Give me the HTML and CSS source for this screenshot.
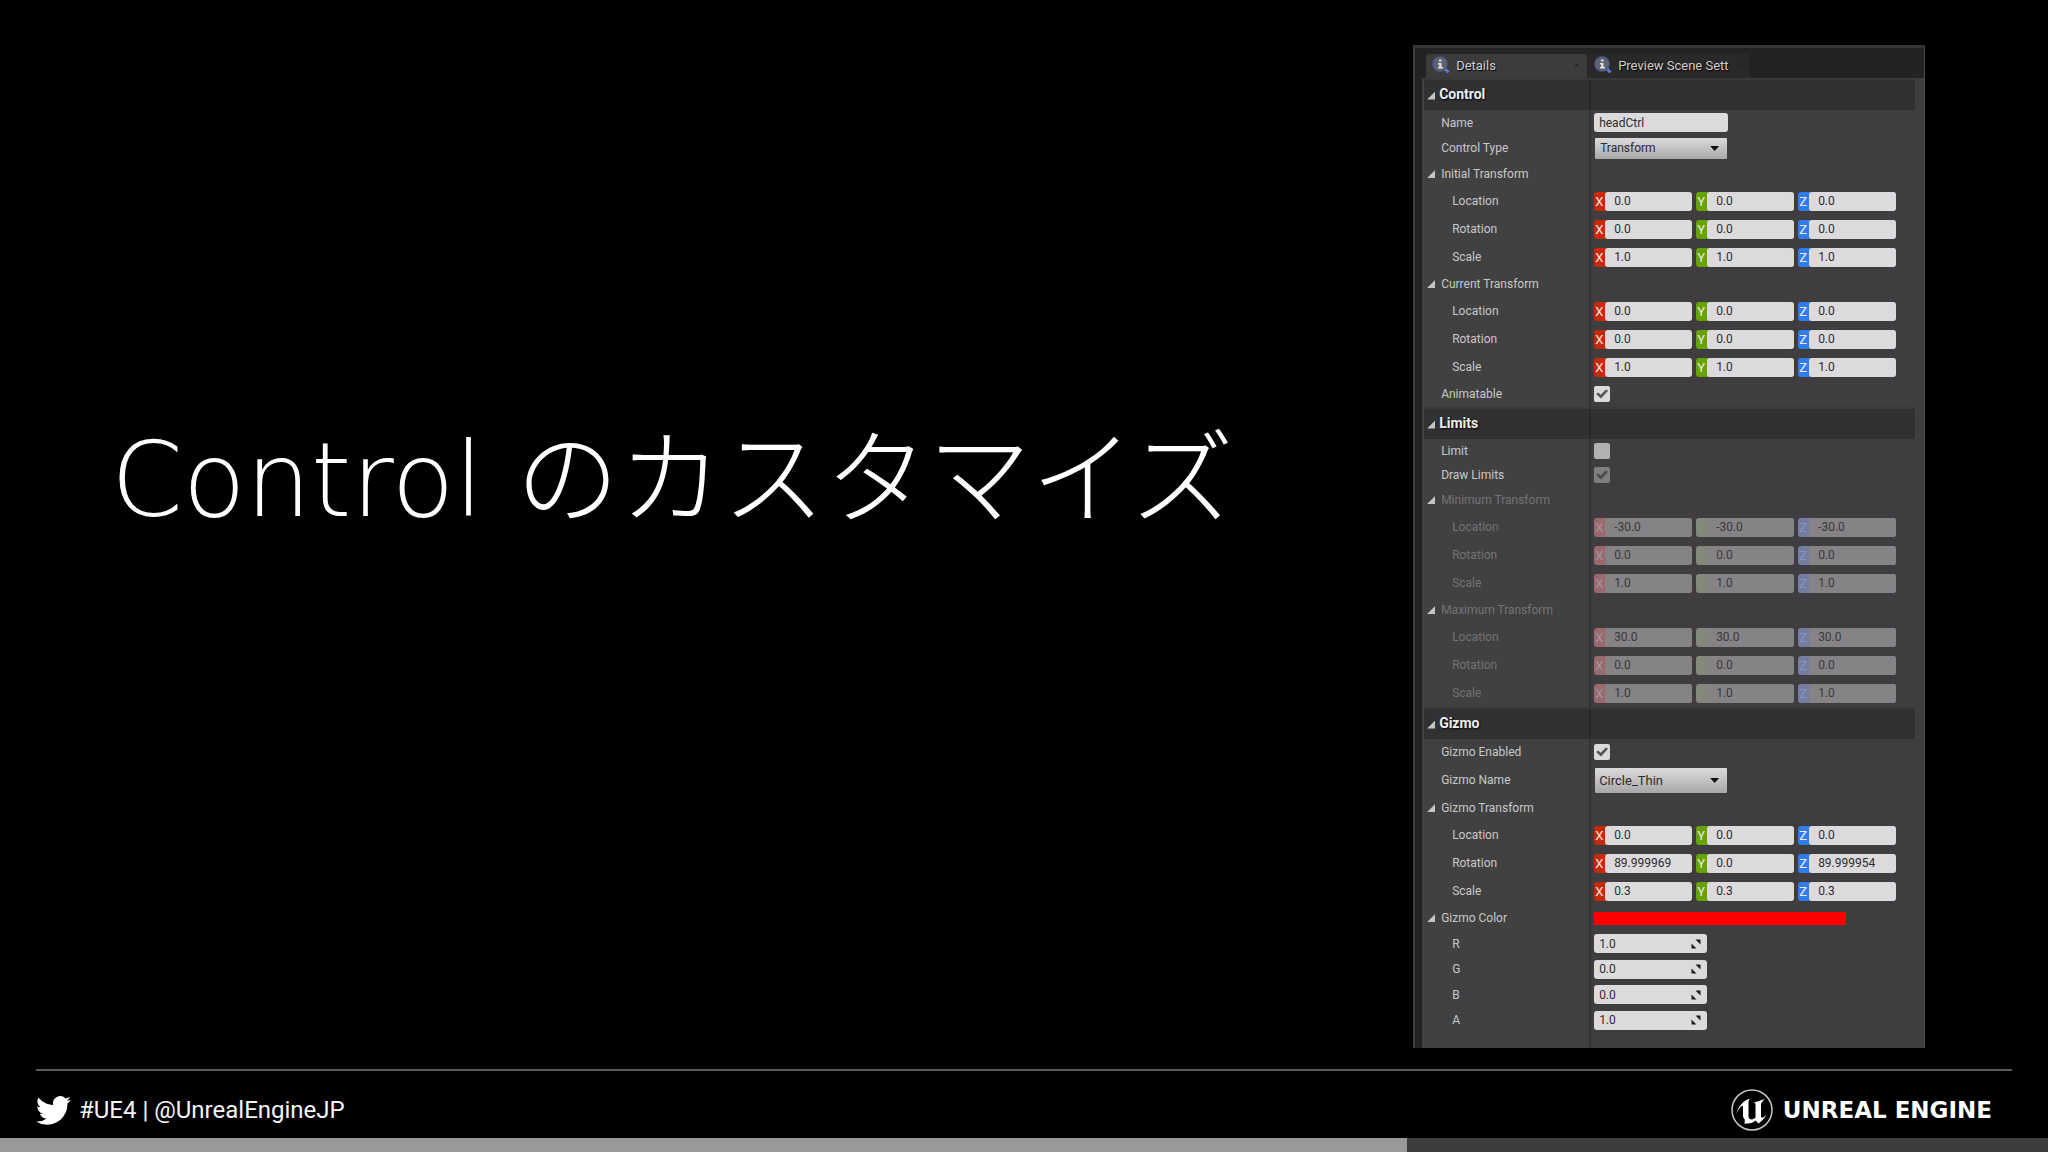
FILE: index.html
```html
<!DOCTYPE html>
<html lang="ja">
<head>
  <meta charset="UTF-8">
  <meta name="viewport" content="width=device-width, initial-scale=1.0">
  <title>Control のカスタマイズ</title>
  <link rel="stylesheet" href="styles.css">
</head>
<body>
  <svg class="defs" width="0" height="0">
    <symbol id="info" viewBox="0 0 18 18">
      <path d="M11 11l5.5 5.5" stroke="#5a78c8" stroke-width="3" />
      <circle cx="8" cy="8" r="7" fill="#62646c" stroke="#4c5c92" stroke-width="1.5" />
      <path d="M7 3.500h2.500v2H7zM6 7h3.500v4H11v1.500H6V11h1.200V8.500H6z" fill="#e0e0e4" />
    </symbol>
    <symbol id="spin" viewBox="0 0 10 10">
      <path d="M4.500 0.500H9.500V5.500zM0.500 4.500V9.500H5.500z" fill="#1c1c1c" />
    </symbol>
  </svg>

  <main class="slide">
    <h1 class="title">Control のカスタマイズ</h1>

    <section class="panel">
      <div class="tabs">
        <button class="tab active"><svg class="tab-icon"><use href="#info" /></svg>Details<span class="close">×</span></button>
        <button class="tab"><svg class="tab-icon"><use href="#info" /></svg>Preview Scene Sett<span class="close">×</span></button>
      </div>

      <div class="details">
        <h2 class="category"><button>Control</button></h2>
        <div class="row short">
          <label for="name">Name</label>
          <input type="text" class="text" id="name" value="headCtrl">
        </div>
        <div class="row">
          <label for="type">Control Type</label>
          <span class="combo"><select id="type"><option>Transform</option></select></span>
        </div>
        <div class="row group"><button>Initial Transform</button></div>
        <div class="row vector">
          <span>Location</span>
          <div class="axes">
            <label class="axis x">X<input type="text" value="0.0"></label>
            <label class="axis y">Y<input type="text" value="0.0"></label>
            <label class="axis z">Z<input type="text" value="0.0"></label>
          </div>
        </div>
        <div class="row vector">
          <span>Rotation</span>
          <div class="axes">
            <label class="axis x">X<input type="text" value="0.0"></label>
            <label class="axis y">Y<input type="text" value="0.0"></label>
            <label class="axis z">Z<input type="text" value="0.0"></label>
          </div>
        </div>
        <div class="row vector">
          <span>Scale</span>
          <div class="axes">
            <label class="axis x">X<input type="text" value="1.0"></label>
            <label class="axis y">Y<input type="text" value="1.0"></label>
            <label class="axis z">Z<input type="text" value="1.0"></label>
          </div>
        </div>
        <div class="row group"><button>Current Transform</button></div>
        <div class="row vector">
          <span>Location</span>
          <div class="axes">
            <label class="axis x">X<input type="text" value="0.0"></label>
            <label class="axis y">Y<input type="text" value="0.0"></label>
            <label class="axis z">Z<input type="text" value="0.0"></label>
          </div>
        </div>
        <div class="row vector">
          <span>Rotation</span>
          <div class="axes">
            <label class="axis x">X<input type="text" value="0.0"></label>
            <label class="axis y">Y<input type="text" value="0.0"></label>
            <label class="axis z">Z<input type="text" value="0.0"></label>
          </div>
        </div>
        <div class="row vector">
          <span>Scale</span>
          <div class="axes">
            <label class="axis x">X<input type="text" value="1.0"></label>
            <label class="axis y">Y<input type="text" value="1.0"></label>
            <label class="axis z">Z<input type="text" value="1.0"></label>
          </div>
        </div>
        <div class="row">
          <label for="animatable">Animatable</label>
          <input type="checkbox" id="animatable" checked>
        </div>

        <h2 class="category"><button>Limits</button></h2>
        <div class="row tight">
          <label for="limit">Limit</label>
          <input type="checkbox" id="limit">
        </div>
        <div class="row tight">
          <label for="draw-limits">Draw Limits</label>
          <input type="checkbox" id="draw-limits" checked disabled>
        </div>
        <div class="row group off"><button>Minimum Transform</button></div>
        <div class="row vector off">
          <span>Location</span>
          <div class="axes">
            <label class="axis x">X<input type="text" value="-30.0" disabled></label>
            <label class="axis y">Y<input type="text" value="-30.0" disabled></label>
            <label class="axis z">Z<input type="text" value="-30.0" disabled></label>
          </div>
        </div>
        <div class="row vector off">
          <span>Rotation</span>
          <div class="axes">
            <label class="axis x">X<input type="text" value="0.0" disabled></label>
            <label class="axis y">Y<input type="text" value="0.0" disabled></label>
            <label class="axis z">Z<input type="text" value="0.0" disabled></label>
          </div>
        </div>
        <div class="row vector off">
          <span>Scale</span>
          <div class="axes">
            <label class="axis x">X<input type="text" value="1.0" disabled></label>
            <label class="axis y">Y<input type="text" value="1.0" disabled></label>
            <label class="axis z">Z<input type="text" value="1.0" disabled></label>
          </div>
        </div>
        <div class="row group off"><button>Maximum Transform</button></div>
        <div class="row vector off">
          <span>Location</span>
          <div class="axes">
            <label class="axis x">X<input type="text" value="30.0" disabled></label>
            <label class="axis y">Y<input type="text" value="30.0" disabled></label>
            <label class="axis z">Z<input type="text" value="30.0" disabled></label>
          </div>
        </div>
        <div class="row vector off">
          <span>Rotation</span>
          <div class="axes">
            <label class="axis x">X<input type="text" value="0.0" disabled></label>
            <label class="axis y">Y<input type="text" value="0.0" disabled></label>
            <label class="axis z">Z<input type="text" value="0.0" disabled></label>
          </div>
        </div>
        <div class="row vector off">
          <span>Scale</span>
          <div class="axes">
            <label class="axis x">X<input type="text" value="1.0" disabled></label>
            <label class="axis y">Y<input type="text" value="1.0" disabled></label>
            <label class="axis z">Z<input type="text" value="1.0" disabled></label>
          </div>
        </div>

        <h2 class="category"><button>Gizmo</button></h2>
        <div class="row">
          <label for="gizmo-enabled">Gizmo Enabled</label>
          <input type="checkbox" id="gizmo-enabled" checked>
        </div>
        <div class="row tall">
          <label for="gizmo-name">Gizmo Name</label>
          <span class="combo large"><select id="gizmo-name"><option>Circle_Thin</option></select></span>
        </div>
        <div class="row group"><button>Gizmo Transform</button></div>
        <div class="row vector">
          <span>Location</span>
          <div class="axes">
            <label class="axis x">X<input type="text" value="0.0"></label>
            <label class="axis y">Y<input type="text" value="0.0"></label>
            <label class="axis z">Z<input type="text" value="0.0"></label>
          </div>
        </div>
        <div class="row vector">
          <span>Rotation</span>
          <div class="axes">
            <label class="axis x">X<input type="text" value="89.999969"></label>
            <label class="axis y">Y<input type="text" value="0.0"></label>
            <label class="axis z">Z<input type="text" value="89.999954"></label>
          </div>
        </div>
        <div class="row vector">
          <span>Scale</span>
          <div class="axes">
            <label class="axis x">X<input type="text" value="0.3"></label>
            <label class="axis y">Y<input type="text" value="0.3"></label>
            <label class="axis z">Z<input type="text" value="0.3"></label>
          </div>
        </div>
        <div class="row group"><button>Gizmo Color</button><div class="swatch"></div></div>
        <div class="row short channel">
          <label for="r">R</label>
          <span class="spin"><input type="text" id="r" value="1.0"><svg><use href="#spin" /></svg></span>
        </div>
        <div class="row channel">
          <label for="g">G</label>
          <span class="spin"><input type="text" id="g" value="0.0"><svg><use href="#spin" /></svg></span>
        </div>
        <div class="row short channel">
          <label for="b">B</label>
          <span class="spin"><input type="text" id="b" value="0.0"><svg><use href="#spin" /></svg></span>
        </div>
        <div class="row channel">
          <label for="a">A</label>
          <span class="spin"><input type="text" id="a" value="1.0"><svg><use href="#spin" /></svg></span>
        </div>
      </div>
    </section>
  </main>

  <footer class="footer">
    <a class="twitter" href="#">
      <svg viewBox="0 0 24 24"><path fill="#fff" d="M23.950 4.570a10 10 0 01-2.820.770 4.960 4.960 0 002.160-2.720c-.950.550-2 .950-3.130 1.180a4.920 4.920 0 00-8.380 4.480C7.690 8.090 4.070 6.130 1.640 3.160a4.820 4.820 0 00-.670 2.480c0 1.710.870 3.210 2.190 4.100a4.900 4.900 0 01-2.230-.620v.060a4.920 4.920 0 003.950 4.830 5 5 0 01-2.210.080 4.940 4.940 0 004.600 3.420A9.870 9.870 0 010 19.540a14 14 0 007.550 2.210c9.050 0 14-7.500 14-13.980 0-.210 0-.420-.020-.630a9.940 9.940 0 002.460-2.550z" /></svg>
      #UE4 | @UnrealEngineJP
    </a>
    <div class="brand">
      <svg viewBox="0 0 42 42">
        <circle cx="21" cy="21" r="20" fill="none" stroke="#c8c8c8" stroke-width="1.500" />
        <path fill="#fff" d="M5.500 24.500C7.500 17 12 12 19 9.500C17.800 11 17.500 12 17.500 14V27.500C17.500 29.500 19 30.500 21 30.500C22.500 30 23.500 29.500 24.500 28.500V15.500C24.500 14 23.500 13.500 22.500 13.500C26 12.500 29.500 11.500 34 10C31 12.500 30 14 30 16V27C30 28.500 31 29 32 28.500C33 28 34 27 35.500 25.500C33.500 29.500 31 32 27.500 34.500L24.500 31.500C22 34 19.500 34.500 13 34.500C14 33.500 14 32 13.500 30C12.500 29 12 28 12 26.500V18C12 16.500 11 16.500 10 17.500C8 19.500 6.500 22 5.500 24.500Z" />
      </svg>
      UNREAL ENGINE
    </div>
  </footer>
  <div class="progress"><div class="progress-bar"></div></div>
</body>
</html>
```
FILE: styles.css
```css
* {
  box-sizing: border-box;
}

body {
  display: flex;
  flex-direction: column;
  min-height: 100vh;
  margin: 0;
  background: #000;
  color: #fff;
  font-family: Roboto, 'Noto Sans CJK JP', sans-serif;
}

button,
input,
select {
  margin: 0;
  border: 0;
  color: inherit;
  font: inherit;
}

.defs {
  position: absolute;
}

.slide {
  flex: 1;
  display: flex;
  align-items: flex-start;
  justify-content: space-between;
  padding: 45px 6% 20px;
}

.title {
  margin: 361px 0 0 -12px;
  font-family: 'DejaVu Sans', 'Noto Sans CJK JP', sans-serif;
  font-size: 103px;
  font-weight: 200;
  line-height: 148px;
  white-space: nowrap;
}

/* Details panel */
.panel {
  flex: 0 0 512px;
  border-top: 3px solid #343436;
  border-left: 2px solid #3c3c3d;
  border-right: 1px solid #4a4a4c;
  background: #232324;
  color: #c8c8c8;
  font-size: 12px;
}

.tabs {
  display: flex;
  gap: 1px;
  height: 30px;
  padding: 6px 0 0 11px;
}

.tab {
  display: flex;
  align-items: center;
  width: 161px;
  padding: 0 8px 2px 6px;
  border-radius: 3px 3px 0 0;
  background: #29292a;
  color: #cfcfcf;
  font-size: 13px;
  text-shadow: 1px 1px 1px #000;
  white-space: nowrap;
}

.tab.active {
  background: #3c3c3d;
}

.tab-icon {
  width: 18px;
  height: 18px;
  margin-right: 6px;
}

.close {
  margin-left: auto;
  color: #222;
  font-size: 9px;
  text-shadow: none;
}

.details {
  margin-left: 7px;
  padding: 0 9px 15px 2px;
  background: linear-gradient(to right, #414142 167px, #323133 167px, #323133 169px, #3f3d3f 169px);
}

.category {
  height: 32px;
  margin: 0;
  border-top: 2px solid #39393a;
  background: rgba(28, 28, 32, 0.42);
  font-size: 14px;
}

.category button {
  display: flex;
  align-items: center;
  gap: 4px;
  height: 28px;
  padding: 0 0 0 3px;
  background: none;
  color: #ececec;
  font-weight: 700;
  text-shadow: 1px 1px 2px #000;
}

.category button::before,
.group button::before {
  content: '';
  width: 8px;
  height: 8px;
  background: #c4c4c4;
  clip-path: polygon(100% 0, 100% 100%, 0 100%);
}

.category button::before {
  margin-top: 3px;
}

.row {
  display: grid;
  grid-template-columns: 153px 1fr;
  align-items: center;
  height: 26px;
  padding-left: 17px;
}

.tight {
  height: 24px;
}

.short {
  height: 25px;
}

.tall {
  height: 30px;
}

.vector {
  grid-template-columns: 142px 1fr;
  height: 28px;
  padding-left: 28px;
}

.channel {
  grid-template-columns: 142px 1fr;
  padding-left: 28px;
}

.group {
  grid-template-columns: 167px 1fr;
  padding-left: 3px;
}

.group button {
  display: flex;
  align-items: center;
  gap: 6px;
  padding: 0;
  background: none;
}

.off {
  color: #737374;
}

.text,
.axis input,
.spin {
  height: 19px;
  border-radius: 3px;
  background: #dcdadc;
  color: #2c2c2c;
}

.text {
  width: 134px;
  padding: 0 5px;
}

.axes {
  display: flex;
  gap: 4px;
}

.axis {
  display: flex;
  justify-content: space-between;
  width: 98px;
  height: 19px;
  border-radius: 3px;
  color: #f4e8e4;
  font-size: 13px;
  line-height: 20px;
  text-indent: 1px;
}

.axis input {
  width: 87px;
  padding: 0 0 0 9px;
  font-size: 12px;
  text-indent: 0;
}

.x {
  background: #c62a08;
}

.y {
  background: #66a300;
}

.z {
  background: #2d7eea;
}

.off .axis {
  color: #a3979c;
}

.off .axis input {
  background: #858385;
  color: #3a383a;
}

.off .x {
  background: #9b686d;
}

.off .y {
  background: #83887a;
  color: #868b7e;
}

.off .z {
  background: #747da0;
  color: #8796c4;
}

.combo {
  position: relative;
  width: 132px;
  margin-left: 1px;
}

.combo select {
  display: block;
  width: 100%;
  height: 21px;
  padding: 0 5px;
  appearance: none;
  border-radius: 1px;
  background: linear-gradient(#dddbdd, #a9a7a9);
  color: #2c2c2c;
}

.combo.large select {
  height: 25px;
  padding: 0 4px;
  font-size: 13px;
}

.combo::after {
  content: '';
  position: absolute;
  top: 50%;
  right: 8px;
  width: 9px;
  height: 5px;
  margin-top: -2px;
  background: #111;
  clip-path: polygon(0 0, 100% 0, 50% 100%);
}

input[type="checkbox"] {
  display: grid;
  place-items: center;
  width: 16px;
  height: 16px;
  appearance: none;
  border-radius: 2px;
  background: #b3b1b3;
}

input[type="checkbox"]:checked {
  background: #dcdadc;
}

input[type="checkbox"]:checked::before {
  content: '';
  width: 12px;
  height: 10px;
  background: #555;
  clip-path: polygon(0 50%, 18% 36%, 38% 58%, 82% 4%, 100% 18%, 40% 96%);
}

input[type="checkbox"]:disabled {
  background: #7f7d7f;
}

input[type="checkbox"]:disabled::before {
  background: #4a494a;
}

.swatch {
  width: 252px;
  height: 13px;
  background: #f00;
}

.spin {
  display: flex;
  align-items: center;
  width: 113px;
  padding: 0 6px 0 5px;
}

.spin input {
  flex: 1;
  min-width: 0;
  padding: 0;
  background: none;
}

.spin svg {
  width: 10px;
  height: 10px;
}

/* Footer */
.footer {
  display: flex;
  align-items: center;
  justify-content: space-between;
  height: 69px;
  margin: 0 36px;
  padding: 11px 20px 0 0;
  border-top: 2px solid #595959;
}

.twitter {
  display: flex;
  align-items: center;
  gap: 8px;
  color: #f4f4f4;
  font-size: 24px;
  text-decoration: none;
}

.twitter svg {
  width: 35px;
  height: 35px;
}

.brand {
  display: flex;
  align-items: center;
  gap: 10px;
  font-family: 'DejaVu Sans', sans-serif;
  font-size: 23px;
  font-weight: 700;
}

.brand svg {
  width: 42px;
  height: 42px;
}

.progress {
  height: 14px;
  background: #3e3c3f;
}

.progress-bar {
  width: 68.7%;
  height: 100%;
  background: #999;
}
```
